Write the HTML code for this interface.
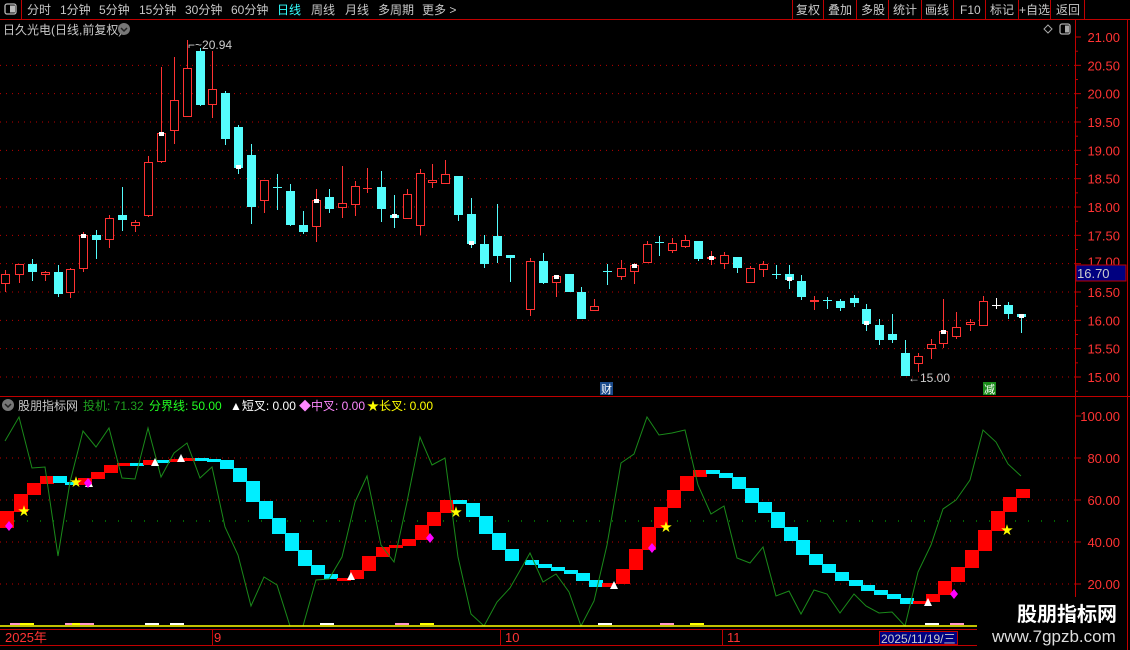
<!DOCTYPE html>
<html><head><meta charset="utf-8"><style>
html,body{margin:0;padding:0;background:#000;width:1130px;height:650px;overflow:hidden}
svg{display:block}
text{font-family:"Liberation Sans","Noto Sans CJK SC",sans-serif}
</style></head><body>
<svg id="s" width="1130" height="650" viewBox="0 0 1130 650" xmlns="http://www.w3.org/2000/svg">
<rect width="1130" height="650" fill="#000"/>
<line x1="0" y1="19.5" x2="1130" y2="19.5" stroke="#c00000"/>
<line x1="21.5" y1="0" x2="21.5" y2="19" stroke="#c00000"/>
<rect x="5" y="4" width="11" height="10" rx="2" fill="none" stroke="#bbb" stroke-width="1.3"/>
<rect x="10" y="5.5" width="5" height="7" fill="#bbb"/>
<g font-size="12" fill="#c8c8c8">
<text x="27" y="14">分时</text><text x="60" y="14">1分钟</text><text x="99" y="14">5分钟</text>
<text x="139" y="14">15分钟</text><text x="185" y="14">30分钟</text><text x="231" y="14">60分钟</text>
<text x="277" y="14" fill="#3ff">日线</text><text x="311" y="14">周线</text><text x="345" y="14">月线</text>
<text x="378" y="14">多周期</text><text x="422" y="14">更多 &gt;</text>
<text x="796" y="14">复权</text><text x="828" y="14">叠加</text><text x="861" y="14">多股</text>
<text x="893" y="14">统计</text><text x="925" y="14">画线</text><text x="960" y="14">F10</text>
<text x="990" y="14">标记</text><text x="1019" y="14">+自选</text><text x="1056" y="14">返回</text>
</g>
<g stroke="#c00000">
<line x1="792.5" y1="0" x2="792.5" y2="19"/><line x1="823.5" y1="0" x2="823.5" y2="19"/>
<line x1="856.5" y1="0" x2="856.5" y2="19"/><line x1="888.5" y1="0" x2="888.5" y2="19"/>
<line x1="921.5" y1="0" x2="921.5" y2="19"/><line x1="953.5" y1="0" x2="953.5" y2="19"/>
<line x1="985.5" y1="0" x2="985.5" y2="19"/><line x1="1018.5" y1="0" x2="1018.5" y2="19"/>
<line x1="1050.5" y1="0" x2="1050.5" y2="19"/><line x1="1084.5" y1="0" x2="1084.5" y2="19"/>
<line x1="1127.5" y1="19" x2="1127.5" y2="650"/>
</g>
<text x="3" y="34" font-size="12" fill="#c8c8c8">日久光电(日线,前复权)</text>
<circle cx="124" cy="29" r="6" fill="#777"/><path d="M121 28 L124 31 L127 28" stroke="#222" stroke-width="1.5" fill="none"/>
<path d="M1048 25 L1052 29 L1048 33 L1044 29 Z" fill="none" stroke="#aaa"/>
<rect x="1060" y="24" width="10" height="10" rx="2" fill="none" stroke="#aaa" stroke-width="1.3"/><rect x="1065" y="25.5" width="4" height="7" fill="#aaa"/>
<line x1="1075.5" y1="19" x2="1075.5" y2="630" stroke="#c00000"/>
<line x1="0" y1="396.5" x2="1130" y2="396.5" stroke="#c00000"/>
<line x1="0" y1="629.5" x2="1075" y2="629.5" stroke="#c00000"/>
<line x1="0" y1="645.5" x2="977" y2="645.5" stroke="#c00000"/>
<g id="g"></g>
<circle cx="8" cy="405" r="6" fill="#777"/><path d="M5 404 L8 407 L11 404" stroke="#222" stroke-width="1.5" fill="none"/>
<g font-size="12">
<text x="18" y="410" fill="#c8c8c8">股朋指标网</text>
<text x="83" y="410" fill="#1e9e1e">投机: 71.32</text>
<text x="149" y="410" fill="#2f2">分界线: 50.00</text>
<text x="230" y="410" fill="#fff">▲短叉: 0.00</text>
<text x="299" y="410" fill="#f8f">◆中叉: 0.00</text>
<text x="367" y="410" fill="#ff0">★长叉: 0.00</text>
</g>
<g font-size="13" fill="#f33">
<text x="5" y="642">2025年</text><text x="214" y="642">9</text><text x="505" y="642">10</text><text x="727" y="642">11</text>
</g>
<line x1="212.5" y1="630" x2="212.5" y2="646" stroke="#c00000"/>
<line x1="500.5" y1="630" x2="500.5" y2="646" stroke="#c00000"/>
<line x1="722.5" y1="630" x2="722.5" y2="646" stroke="#c00000"/>
<rect x="879.5" y="631.5" width="78" height="13" fill="#000080" stroke="#c00000"/>
<text x="881" y="643" font-size="12" fill="#ccc">2025/11/19/三</text>
<rect x="977" y="597" width="150" height="53" fill="#000"/>
<text x="1017" y="621" font-size="20" font-weight="bold" fill="#fff">股朋指标网</text>
<text x="992" y="642" font-size="17" fill="#ddd">www.7gpzb.com</text>
<text x="188" y="49" font-size="12" fill="#ccc">⌐~20.94</text>
<text x="908" y="382" font-size="12" fill="#ccc">←15.00</text>
<rect x="600" y="382" width="13" height="13" fill="#1a4a8a"/><text x="601" y="393" font-size="11" fill="#fff">财</text>
<rect x="983" y="382" width="13" height="13" fill="#1a8a1a"/><text x="984" y="393" font-size="11" fill="#fff">减</text>
<rect x="1076" y="265" width="50" height="16" fill="#000080" stroke="#c00000"/>
<text x="1077" y="278" font-size="13" fill="#ccc">16.70</text>
</svg>
<script>
var g=document.getElementById('g'),h='';
for(var i=0;i<=12;i++){var p=21-i*0.5,y=37+i*28.333;
 if(i>0)h+='<line x1="0" y1="'+y+'" x2="1075" y2="'+y+'" stroke="#b00" stroke-dasharray="1,5"/>';
 if(p!==17)h+='<text x="1120" y="'+(y+5)+'" font-size="13" fill="#f33" text-anchor="end">'+p.toFixed(2)+'</text>';
 else h+='<text x="1120" y="'+(y+3)+'" font-size="13" fill="#f33" text-anchor="end">17.00</text>';
 h+='<line x1="1075" y1="'+y+'" x2="1081" y2="'+y+'" stroke="#c00000"/>';
 h+='<line x1="1075" y1="'+(y+14.2)+'" x2="1078" y2="'+(y+14.2)+'" stroke="#c00000"/>';}
[[458,80],[500,60],[542,40],[584,20]].forEach(function(a){h+='<line x1="0" y1="'+a[0]+'" x2="1075" y2="'+a[0]+'" stroke="#b00" stroke-dasharray="1,5"/>';});
h+='<line x1="14" y1="521" x2="1075" y2="521" stroke="#0c0" stroke-dasharray="1,12"/>';
[[416,100],[458,80],[500,60],[542,40],[584,20]].forEach(function(a){h+='<text x="1120" y="'+(a[0]+5)+'" font-size="13" fill="#f33" text-anchor="end">'+a[1].toFixed(2)+'</text><line x1="1075" y1="'+a[0]+'" x2="1081" y2="'+a[0]+'" stroke="#c00000"/>';});
var C=[[5,274,284,270,292,'r'],[19,264,275,264,283,'r'],[32,264,272,259,281,'c'],[45,272,275,271,281,'r'],[58,272,294,265,297,'c'],[70,269,293,268,298,'r'],[83,235,269,232,272,'r',1],[96,235,240,230,259,'c'],[109,218,240,215,248,'r'],[122,215,220,187,231,'c'],[135,222,226,220,232,'r'],[148,162,216,156,217,'r'],[161,133,162,67,163,'r',1],[174,100,131,57,144,'r'],[187,68,117,40,117,'r'],[200,51,105,48,106,'c'],[212,89,105,51,118,'r'],[225,93,139,91,145,'c'],[238,127,168,125,174,'c',2],[251,155,207,144,224,'c'],[264,180,201,180,213,'r'],[277,187,187,174,210,'c'],[290,191,225,184,226,'c'],[303,225,232,211,234,'c'],[316,200,227,189,242,'r',1],[329,197,209,189,213,'c'],[342,203,208,166,218,'r'],[355,186,205,181,216,'r'],[367,188,189,168,193,'r'],[381,187,209,171,222,'c'],[394,215,218,195,228,'c',1],[407,194,219,189,219,'r'],[420,173,226,169,235,'r'],[432,180,183,164,188,'r'],[445,174,184,160,184,'r'],[458,176,215,176,221,'c'],[471,214,244,198,248,'c',2],[484,244,264,235,268,'c'],[497,236,256,204,263,'c'],[510,255,258,255,282,'c'],
[530,261,310,258,316,'r'],[543,261,283,253,284,'c'],[556,276,283,276,297,'r',1],[569,274,292,274,292,'c'],[581,292,319,287,319,'c'],[594,306,311,299,311,'r'],[607,271,272,264,285,'c'],[621,268,277,260,280,'r'],[634,265,272,263,284,'r',1],[647,244,263,241,263,'r'],[659,242,243,236,256,'c'],[672,243,251,238,253,'r'],[685,240,247,235,248,'r'],[698,241,259,241,261,'c'],[711,257,259,251,265,'r',1],[724,255,264,252,269,'r'],[737,257,268,257,273,'c'],[750,268,283,266,283,'r'],[763,264,270,261,277,'r'],[776,274,275,265,279,'c'],[789,274,280,265,289,'c',2],[801,281,297,275,300,'c'],[814,300,302,296,310,'r'],[827,300,301,297,309,'c'],[840,301,308,299,311,'c'],[854,298,303,295,307,'c'],[866,309,324,304,331,'c',2],[879,325,340,319,345,'c'],[892,334,340,314,343,'c'],[905,353,376,340,376,'c'],[918,356,364,353,372,'r'],[931,344,349,339,359,'r'],[943,331,344,299,348,'r',1],[956,327,337,312,339,'r'],[970,322,325,319,331,'r'],[983,301,326,296,326,'r'],[996,305,306,298,309,'w'],[1008,305,314,302,319,'c'],[1021,314,317,314,333,'c',2]];
C.forEach(function(c){var x=c[0],col=c[5]=='r'?'#ff3232':c[5]=='w'?'#fff':'#54fcfc';
 h+='<line x1="'+(x+.5)+'" y1="'+c[3]+'" x2="'+(x+.5)+'" y2="'+c[4]+'" stroke="'+col+'"/>';
 var bh=c[2]-c[1];
 if(bh<=1){h+='<line x1="'+(x-4)+'" y1="'+(c[1]+.5)+'" x2="'+(x+5)+'" y2="'+(c[1]+.5)+'" stroke="'+col+'"/>';}
 else if(c[5]=='r'){h+='<rect x="'+(x-3.5)+'" y="'+(c[1]+.5)+'" width="8" height="'+(bh-1)+'" fill="#000" stroke="'+col+'"/>';}
 else h+='<rect x="'+(x-4)+'" y="'+c[1]+'" width="9" height="'+bh+'" fill="'+col+'"/>';
 if(c[6]){var my=c[6]==1?c[1]-1:c[2]-3;h+='<rect x="'+(x-2)+'" y="'+my+'" width="5" height="4" fill="#fff"/>';}
});
var B=[[511,528,'r'],[494,512,'r'],[483,495,'r'],[476,484,'r'],[476,483,'c'],[482,485,'c'],[478,485,'r'],[472,479,'r'],[465,473,'r'],[463,466,'r'],[463,465,'c'],[460,465,'r'],[460,461,'c'],[459,460,'r'],[458,461,'r'],[458,460,'c'],[459,461,'c'],[460,469,'c'],[468,482,'c'],[481,502,'c'],[501,519,'c'],[518,534,'c'],[533,551,'c'],[550,566,'c'],[565,575,'c'],[574,579,'c'],[578,579,'r'],[570,579,'r'],[556,571,'r'],[547,557,'r'],[545,548,'r'],[539,546,'r'],[525,540,'r'],[512,526,'r'],[500,513,'r'],[500,504,'c'],[503,517,'c'],[516,534,'c'],[533,550,'c'],[549,561,'c'],
[560,565,'c'],[564,568,'c'],[567,571,'c'],[570,574,'c'],[573,581,'c'],[580,587,'c'],[583,587,'r'],[569,584,'r'],[549,570,'r'],[527,550,'r'],[507,528,'r'],[490,508,'r'],[476,491,'r'],[470,477,'r'],[470,474,'c'],[473,478,'c'],[477,489,'c'],[488,503,'c'],[502,513,'c'],[512,528,'c'],[527,541,'c'],[540,555,'c'],[554,565,'c'],[564,573,'c'],[572,581,'c'],[580,586,'c'],[585,591,'c'],[590,595,'c'],[594,599,'c'],[598,604,'c'],[601,604,'r'],[594,602,'r'],[581,595,'r'],[567,582,'r'],[550,568,'r'],[530,551,'r'],[511,531,'r'],[497,512,'r'],[489,498,'r']];
B.forEach(function(b,i){var x=C[i][0];var t=b[0],bt=b[1];if(bt-t<3){bt=t+3;}
 h+='<rect x="'+(x-5)+'" y="'+t+'" width="14" height="'+(bt-t)+'" fill="'+(b[2]=='r'?'#ff0000':'#00eeff')+'"/>';});
var G=[441,417,468,467,556,482,431,447,428,478,479,428,477,453,443,478,467,527,555,606,577,585,626,626,580,579,557,502,476,545,562,502,437,465,458,557,614,626,602,588,553,582,574,592,626,601,545,463,454,417,435,433,430,485,514,506,558,563,547,596,591,614,590,594,613,594,606,613,612,626,572,545,509,500,480,430,442,464,476];
var pts=G.map(function(v,i){return C[i][0]+','+v;}).join(' ');
h+='<polyline points="'+pts+'" fill="none" stroke="#1a8a1a" stroke-width="1"/>';
h+='<line x1="0" y1="626" x2="977" y2="626" stroke="#ff0" stroke-width="1.5"/>';
[[10,'#f9c'],[20,'#ff0'],[65,'#f9c'],[72,'#ff0'],[80,'#f9c'],[145,'#fff'],[170,'#fff'],[320,'#fff'],[395,'#f9c'],[420,'#ff0'],[598,'#fff'],[660,'#f9c'],[690,'#ff0'],[925,'#fff'],[950,'#f9c']].forEach(function(a){h+='<rect x="'+a[0]+'" y="623" width="14" height="2" fill="'+a[1]+'"/>';});
function tri(x,y){return '<path d="M'+x+' '+(y-5)+' L'+(x+4)+' '+(y+3)+' L'+(x-4)+' '+(y+3)+' Z" fill="#fff"/>';}
function dia(x,y){return '<path d="M'+x+' '+(y-5)+' L'+(x+4)+' '+y+' L'+x+' '+(y+5)+' L'+(x-4)+' '+y+' Z" fill="#f0f"/>';}
function star(x,y){return '<text x="'+x+'" y="'+(y+4)+'" font-size="12" fill="#ff0" text-anchor="middle" font-family="DejaVu Sans">★</text>';}
h+=dia(9,526)+star(24,511)+star(76,482)+tri(89,484)+dia(88,483)+tri(155,463)+tri(181,459)+tri(351,577)+dia(430,538)+star(456,512)+tri(614,586)+dia(652,548)+star(666,527)+tri(928,603)+dia(954,594)+star(1007,530);
g.innerHTML=h;
</script>
</body></html>
